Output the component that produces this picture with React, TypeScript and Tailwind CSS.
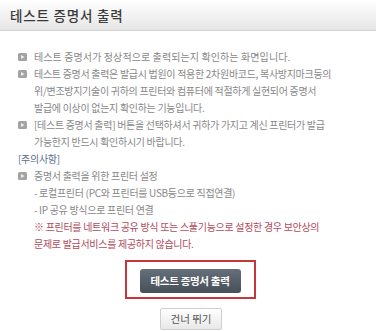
import React from "react";

const Bullet = () => (
  <svg width="9" height="8" viewBox="0 0 9 8" className="shrink-0 mr-[7px]">
    <rect x="0" y="0" width="9" height="8" rx="1.5" fill="#a3a3a3" />
    <path d="M3 2 L6.5 4 L3 6 Z" fill="#eeeeee" />
  </svg>
);

const Line: React.FC<{ children: React.ReactNode; className?: string }> = ({ children, className = "" }) => (
  <div className={`h-[17px] flex items-center whitespace-nowrap ${className}`}>{children}</div>
);

export default function App() {
  return (
    <div
      className="w-[376px] h-[331px] bg-white overflow-hidden"
      style={{ fontFamily: '"Noto Sans CJK KR", "Noto Sans", sans-serif' }}
    >
      <div className="h-[31px] flex items-center pl-[10px] bg-gradient-to-b from-white to-[#e6e6e6] border-b border-[#d2d2d2]">
        <h1 className="text-[13.5px] font-medium text-[#3a3a3a] tracking-[0.8px]">테스트 증명서 출력</h1>
      </div>
      <div className="pt-[17px] pl-[18px] text-[10px] text-[#888] tracking-[-0.3px]">
        <Line>
          <Bullet />
          <span className="tracking-[0.1px]">테스트 증명서가 정상적으로 출력되는지 확인하는 화면입니다.</span>
        </Line>
        <Line>
          <Bullet />
          <span>테스트 증명서 출력은 발급시 법원이 적용한 2차원바코드, 복사방지마크등의</span>
        </Line>
        <Line className="pl-[16px]">위/변조방지기술이 귀하의 프린터와 컴퓨터에 적절하게 실현되어 증명서</Line>
        <Line className="pl-[16px]">발급에 이상이 없는지 확인하는 기능입니다.</Line>
        <Line>
          <Bullet />
          <span>[테스트 증명서 출력] 버튼을 선택하셔서 귀하가 가지고 계신 프린터가 발급</span>
        </Line>
        <Line className="pl-[16px]">가능한지 반드시 확인하시기 바랍니다.</Line>
        <Line className="text-[#5c6f8e]">[주의사항]</Line>
        <Line>
          <Bullet />
          <span>증명서 출력을 위한 프린터 설정</span>
        </Line>
        <Line className="pl-[16px]">- 로컬프린터 (PC와 프린터를 USB등으로 직접연결)</Line>
        <Line className="pl-[16px]">- IP 공유 방식으로 프린터 연결</Line>
        <Line className="pl-[16px] text-[#b14b5b]">※ 프린터를 네트워크 공유 방식 또는 스풀기능으로 설정한 경우 보안상의</Line>
        <Line className="pl-[16px] text-[#b14b5b]">문제로 발급서비스를 제공하지 않습니다.</Line>
      </div>
      <div className="flex flex-col items-center pt-[8px]">
        <div className="border-2 border-[#c8363d] px-[13px] py-[4px] ml-[4px]">
          <button className="w-[101px] h-[24px] rounded-[3px] bg-gradient-to-b from-[#66707a] to-[#474f58] text-white text-[10.5px] font-bold tracking-[-0.3px]">
            테스트 증명서 출력
          </button>
        </div>
        <button className="mt-[9px] ml-[6px] w-[62px] h-[22px] rounded-[2px] border border-[#cfcfcf] bg-gradient-to-b from-white to-[#e8e8e8] text-[#555] text-[10.5px]">
          건너 뛰기
        </button>
      </div>
    </div>
  );
}
